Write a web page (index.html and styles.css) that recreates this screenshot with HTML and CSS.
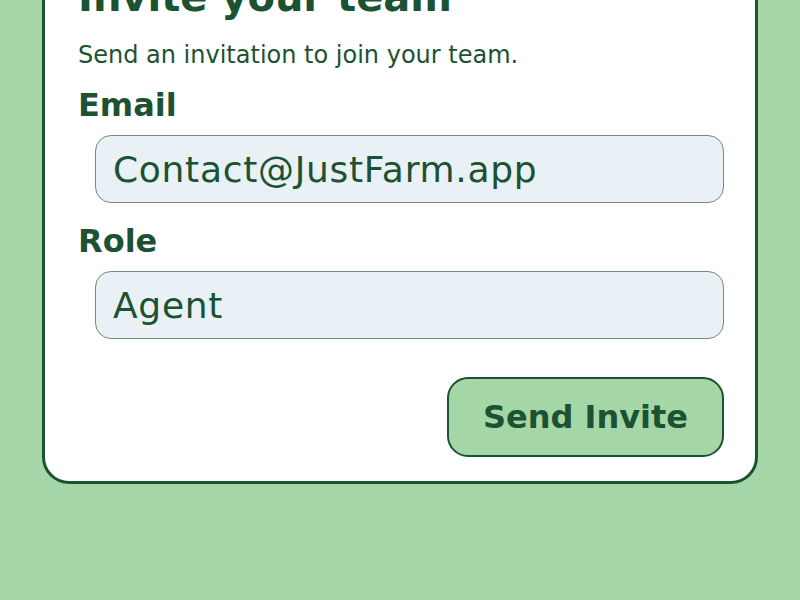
FILE: index.html
```html
<!DOCTYPE html>
<html lang="en">
<head>
<meta charset="utf-8">
<title>Invite your team</title>
<link rel="stylesheet" href="styles.css">
</head>
<body>
<main class="page">
  <section class="card">
    <h1 class="title">Invite your team</h1>
    <p class="subtitle">Send an invitation to join your team.</p>
    <form class="form">
      <label class="label" for="email">Email</label>
      <div class="field-wrap">
        <input class="field" id="email" type="text" value="Contact@JustFarm.app">
      </div>
      <label class="label label-next" for="role">Role</label>
      <div class="field-wrap">
        <input class="field" id="role" type="text" value="Agent">
      </div>
      <div class="actions">
        <button class="btn" type="button">Send Invite</button>
      </div>
    </form>
  </section>
</main>
</body>
</html>
```

FILE: styles.css
```css
* { box-sizing: border-box; }
html, body { margin: 0; padding: 0; }
body {
  background: #a5d6a7;
  font-family: "DejaVu Sans", sans-serif;
  color: #1b5232;
  height: 600px;
  overflow: hidden;
}
.page {
  padding: 0 42px;
}
.card {
  margin-top: -32px;
  background: #ffffff;
  border: 3px solid #1b5232;
  border-radius: 27px;
  padding: 0 31px 24px 33px;
}
.title {
  margin: 0;
  font-size: 40px;
  line-height: 52px;
  font-weight: 700;
}
.subtitle {
  margin: 14px 0 0;
  font-size: 24px;
  line-height: 36px;
  font-weight: 400;
}
.form {
  display: flex;
  flex-direction: column;
}
.label {
  font-size: 32px;
  font-weight: 700;
  line-height: 44px;
  margin-top: 10px;
}
.label-next {
  margin-top: 16px;
}
.field-wrap {
  padding-left: 17px;
  margin-top: 8px;
}
.field {
  display: block;
  width: 100%;
  height: 68px;
  border: 1px solid #6f8f78;
  border-radius: 16px;
  background: #e9f1f7;
  color: #1b5232;
  font-family: inherit;
  font-size: 36px;
  letter-spacing: 0.7px;
  padding: 0 17px;
  outline: none;
}
.actions {
  display: flex;
  justify-content: flex-end;
  margin-top: 38px;
}
.btn {
  width: 277px;
  height: 80px;
  border: 2px solid #1b5232;
  border-radius: 21px;
  background: #a5d6a7;
  color: #1b5232;
  font-family: inherit;
  font-size: 32px;
  font-weight: 700;
}
```
